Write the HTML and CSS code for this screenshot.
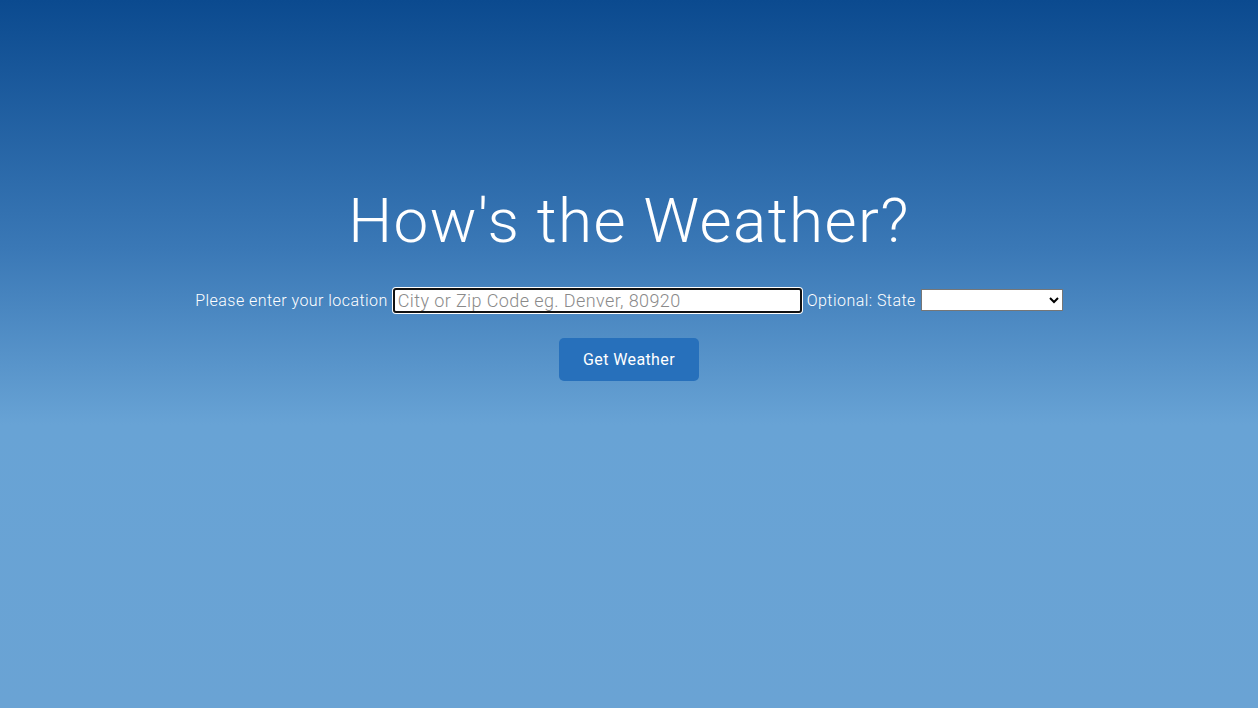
FILE: index.html
```html
<!DOCTYPE html>
<html lang="en">
<head>
<meta charset="utf-8">
<title>How's the Weather?</title>
<link rel="stylesheet" href="styles.css">
</head>
<body>
<main class="page">
  <h1 class="title">How's the Weather?</h1>
  <form class="form">
    <div class="row">
      <label class="label" for="loc">Please enter your location</label>
      <input class="input" id="loc" type="text" placeholder="City or Zip Code eg. Denver, 80920">
      <label class="label" for="state">Optional: State</label>
      <select class="select" id="state"><option></option></select>
    </div>
    <button class="btn" type="button">Get Weather</button>
  </form>
</main>
</body>
</html>
```
FILE: styles.css
```css
html, body {
  margin: 0;
  height: 100%;
}
body {
  background: linear-gradient(to bottom, #0b4a8f 0%, #3a78b6 35%, #68a3d5 60%, #6aa3d4 100%);
  font-family: Roboto, "Liberation Sans", sans-serif;
  font-weight: 300;
  color: #fff;
}
.page {
  display: flex;
  flex-direction: column;
  align-items: center;
  padding-top: 183px;
}
.title {
  margin: 0;
  font-size: 62px;
  font-weight: 300;
  line-height: 76px;
  letter-spacing: 1.4px;
}
.form {
  display: flex;
  flex-direction: column;
  align-items: center;
  margin-top: 28px;
}
.row {
  display: flex;
  align-items: center;
  gap: 5px;
  height: 26px;
}
.label {
  font-size: 16px;
  letter-spacing: 0.45px;
}
.input {
  box-sizing: border-box;
  width: 409px;
  height: 25px;
  border: 2px solid #111;
  border-radius: 3px;
  box-shadow: 0 0 0 1px #fff;
  padding: 0 3px;
  font-family: inherit;
  font-weight: 300;
  font-size: 18px;
  letter-spacing: 0.4px;
  color: #333;
  background: #fff;
  outline: none;
}
.input::placeholder {
  color: #8a8a8a;
}
.select {
  box-sizing: border-box;
  width: 142px;
  height: 22px;
  border: 1px solid #767676;
  background: #fff;
  font-size: 13px;
}
.btn {
  margin-top: 25px;
  width: 140px;
  height: 43px;
  border: none;
  border-radius: 5px;
  background: #2770bb;
  color: #fff;
  font-family: inherit;
  font-weight: 400;
  font-size: 16px;
  letter-spacing: 0.4px;
}
```
